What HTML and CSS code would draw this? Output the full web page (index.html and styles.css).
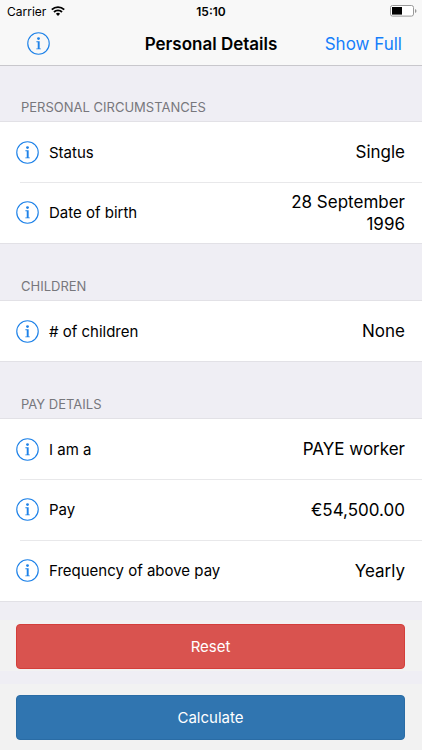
FILE: index.html
```html
<!DOCTYPE html>
<html lang="en">

<head>
    <meta charset="utf-8">
    <meta name="viewport" content="width=device-width, initial-scale=1">
    <title>Personal Details</title>
    <link rel="stylesheet" href="styles.css">
</head>

<body>
    <!-- shared info icon -->
    <svg class="defs" width="0" height="0" aria-hidden="true">
        <symbol id="info" viewBox="0 0 24 24">
            <circle cx="12" cy="12" r="11.2" fill="none" stroke="currentColor" stroke-width="1.2"/>
            <circle cx="12" cy="6.9" r="1.5" fill="currentColor"/>
            <path d="M9.8 9.7h3.4v7.400h1.200v.9H9.700v-.9h1.500v-6.500H9.800z" fill="currentColor"/>
        </symbol>
    </svg>

    <header class="top">
        <div class="status">
            <div class="carrier">
                <span>Carrier</span>
                <svg width="14" height="10" viewBox="0 0 14 10">
                    <path d="M.8 3.600a8.900 8.900 0 0 1 12.400 0M3 6a5.700 5.700 0 0 1 8 0" fill="none" stroke="#000" stroke-width="1.9"/>
                    <path d="M4.900 7.800a3 3 0 0 1 4.200 0L7 10z" fill="#000"/>
                </svg>
            </div>
            <span class="time">15:10</span>
            <div class="battery">
                <svg width="27" height="12" viewBox="0 0 27 12">
                    <rect x=".5" y=".5" width="23" height="10.6" rx="2" fill="#fff" stroke="#999"/>
                    <rect x="2" y="2" width="10" height="7.6" fill="#000"/>
                    <path d="M25 4v4q1.500-.6 1.500-2T25 4z" fill="#999"/>
                </svg>
            </div>
        </div>
        <nav class="nav">
            <button class="info" aria-label="About"><svg><use href="#info"/></svg></button>
            <h1>Personal Details</h1>
            <a class="show" href="#">Show Full</a>
        </nav>
    </header>

    <main>
        <h2>PERSONAL CIRCUMSTANCES</h2>
        <ul>
            <li>
                <button class="info" aria-label="About status"><svg><use href="#info"/></svg></button>
                <label for="status">Status</label>
                <button class="value" id="status">Single</button>
            </li>
            <li>
                <button class="info" aria-label="About date of birth"><svg><use href="#info"/></svg></button>
                <label for="dob">Date of birth</label>
                <button class="value" id="dob">28 September 1996</button>
            </li>
        </ul>

        <h2>CHILDREN</h2>
        <ul>
            <li>
                <button class="info" aria-label="About children"><svg><use href="#info"/></svg></button>
                <label for="children"># of children</label>
                <button class="value" id="children">None</button>
            </li>
        </ul>

        <h2>PAY DETAILS</h2>
        <ul>
            <li>
                <button class="info" aria-label="About worker type"><svg><use href="#info"/></svg></button>
                <label for="worker">I am a</label>
                <button class="value" id="worker">PAYE worker</button>
            </li>
            <li>
                <button class="info" aria-label="About pay"><svg><use href="#info"/></svg></button>
                <label for="pay">Pay</label>
                <input class="value" type="text" id="pay" value="€54,500.00">
            </li>
            <li>
                <button class="info" aria-label="About frequency"><svg><use href="#info"/></svg></button>
                <label for="freq">Frequency of above pay</label>
                <button class="value" id="freq">Yearly</button>
            </li>
        </ul>
    </main>

    <footer>
        <div class="action">
            <button class="btn reset">Reset</button>
        </div>
        <div class="action">
            <button class="btn calculate">Calculate</button>
        </div>
    </footer>
</body>

</html>
```

FILE: styles.css
```css
*{
    box-sizing: border-box;
}

body{
    margin: 0;
    font-family: Inter, Roboto, Arial, sans-serif;
    font-size: 15px;
    color: #000;
    background-color: #efeef4;
}

button, input{
    font-family: inherit;
    border: none;
    background: none;
    padding: 0;
    margin: 0;
}

.defs{
    position: absolute;
}

.top{
    background-color: #f8f8f8;
    border-bottom: 1px solid #c8c7cc;
}

.status{
    display: grid;
    grid-template-columns: 1fr auto 1fr;
    align-items: center;
    height: 22px;
    padding: 0 5px;
    font-size: 12px;
}

.carrier{
    display: flex;
    align-items: center;
    gap: 5px;
    padding-left: 2px;
}

.time{
    font-weight: 600;
}

.battery{
    display: flex;
    justify-content: flex-end;
}

.nav{
    display: grid;
    grid-template-columns: 1fr auto 1fr;
    align-items: center;
    height: 43px;
    padding: 0 20px;
}

.nav .info{
    margin-left: 7px;
}

h1{
    margin: 0;
    font-size: 17px;
    font-weight: 600;
}

.show{
    justify-self: end;
    font-size: 17px;
    color: #157efb;
    text-decoration: none;
}

.info{
    width: 23px;
    height: 23px;
    flex: none;
    color: #1e82e8;
}

.info svg{
    display: block;
    width: 23px;
    height: 23px;
}

h2{
    margin: 0;
    padding: 33px 21px 5px;
    font-size: 13px;
    line-height: 17px;
    font-weight: 400;
    color: #77777c;
}

ul + h2{
    padding-top: 34px;
}

ul{
    margin: 0;
    padding: 0;
    list-style: none;
    background-color: #fff;
    border-top: 1px solid #e2e1e6;
    border-bottom: 1px solid #e2e1e6;
}

li{
    display: flex;
    align-items: center;
    min-height: 60px;
    padding: 0 17px 0 16px;
}

/* separator is inset from the left */
li + li{
    min-height: 61px;
    background: linear-gradient(#e8e8ea, #e8e8ea) 20px 0 / 100% 1px no-repeat;
}

label{
    flex: 1;
    margin-left: 10px;
}

.value{
    width: 120px;
    font-size: 17px;
    line-height: 22px;
    text-align: right;
    color: #000;
}

footer{
    display: flex;
    flex-direction: column;
    gap: 13px;
    padding-top: 18px;
}

.action{
    padding: 4px 17px 2px 16px;
    background-color: #f2f2f2;
}

.action + .action{
    padding: 11px 17px 10px 16px;
}

.btn{
    display: block;
    width: 100%;
    height: 45px;
    border-radius: 4px;
    font-size: 15px;
    color: #fff;
}

.reset{
    background-color: #d9534f;
    border: 1px solid #d43f3a;
}

.calculate{
    background-color: #3075b0;
    border: 1px solid #2a6ca5;
}
```
